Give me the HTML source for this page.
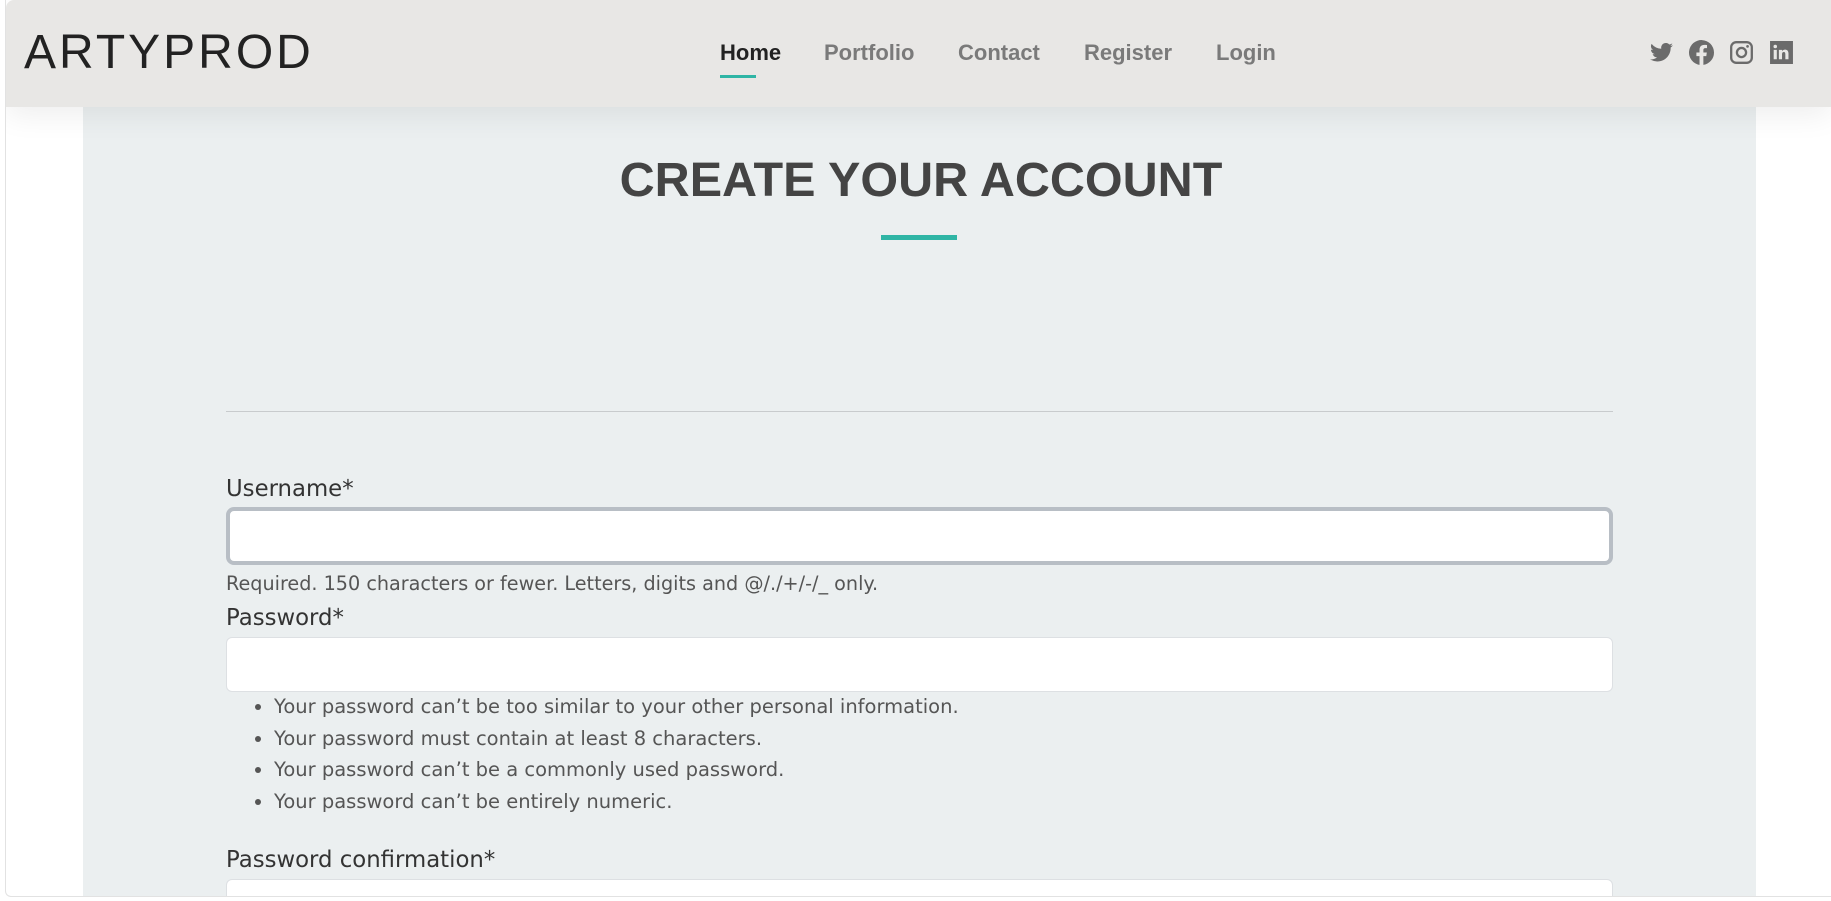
<!DOCTYPE html>
<html><head><style>
*{box-sizing:border-box;margin:0;padding:0}
body{width:1831px;height:901px;overflow:hidden;background:#fff;font-family:"Liberation Sans",Arial,sans-serif;position:relative}
.frame{position:absolute;left:5px;top:0;right:0;bottom:4px;background:#fff;border-left:1px solid #e2e2e2;border-bottom:1px solid #e2e2e2;border-radius:0 0 0 6px;overflow:hidden}
.panel{position:absolute;left:77px;width:1673px;top:0;bottom:0;background:#ebeff0}
header{position:absolute;left:0;right:0;top:0;height:107px;background:#e8e7e5;box-shadow:0 8px 30px rgba(0,0,0,.07);border-radius:8px 0 0 0}
.logo{position:absolute;left:18px;top:25px;font-size:48px;letter-spacing:3px;color:#222}
nav a{position:absolute;top:40px;font-size:22px;font-weight:bold;color:#7a7a7a;text-decoration:none}
nav a.on{color:#222}
.ul{position:absolute;left:714px;top:75px;width:36px;height:3px;background:#2fb5a5}
.icons{position:absolute;left:1643px;top:40px;display:flex;gap:15px}
.icons svg{width:25px;height:25px;fill:#6b6b6b}
h1{position:absolute;left:0;width:100%;top:152px;text-align:center;font-size:48.5px;font-weight:bold;color:#444;padding-left:5px}
.bar{position:absolute;left:875px;top:235px;width:76px;height:5px;background:#2fb5a5}
.hr{position:absolute;left:220px;width:1387px;top:411px;height:1px;background:#c8cbcd}
.f{position:absolute;left:220px;font-family:"DejaVu Sans","Liberation Sans",sans-serif;color:#333}
.lbl{font-size:22.8px}
.help{font-size:19.2px;color:#555}
.inp{position:absolute;left:220px;width:1387px;background:#fff;border:1px solid #dde0e3;border-radius:6px}
.focus{border:4px solid #b8bec5;border-radius:8px}
ul.f{font-size:19.5px;color:#555;list-style:disc;padding-left:48px}
ul.f li{height:31.5px}
</style></head><body>
<div class="frame">
<div class="panel"></div>
<header>
<div class="logo">ARTYPROD</div>
<nav>
<a class="on" style="left:714px">Home</a>
<a style="left:818px">Portfolio</a>
<a style="left:952px">Contact</a>
<a style="left:1078px">Register</a>
<a style="left:1210px">Login</a>
</nav>
<div class="ul"></div>
<div class="icons">
<svg viewBox="0 0 24 24"><path d="M23 5c-.8.4-1.7.6-2.6.7.9-.6 1.6-1.4 2-2.5-.9.5-1.900.9-2.900 1.1A4.5 4.5 0 0 0 11.8 8.4 12.8 12.8 0 0 1 2.5 3.7a4.5 4.5 0 0 0 1.4 6c-.7 0-1.4-.2-2-.6 0 2.2 1.5 4 3.6 4.4-.7.2-1.4.2-2 .1.6 1.8 2.3 3.1 4.2 3.1A9 9 0 0 1 1 18.6 12.8 12.8 0 0 0 8 20.6c8.3 0 12.8-6.9 12.8-12.8v-.6c.9-.6 1.6-1.4 2.2-2.2z"/></svg>
<svg viewBox="0 0 24 24"><path d="M24 12a12 12 0 1 0-13.9 11.9v-8.4H7.1V12h3V9.4c0-3 1.8-4.7 4.5-4.7 1.3 0 2.7.2 2.700.2v2.9h-1.5c-1.5 0-2 .9-2 1.9V12h3.3l-.5 3.5h-2.8v8.4A12 12 0 0 0 24 12z"/></svg>
<svg viewBox="0 0 24 24"><path d="M7 1h10a6 6 0 0 1 6 6v10a6 6 0 0 1-6 6H7a6 6 0 0 1-6-6V7a6 6 0 0 1 6-6zm0 2.2A3.8 3.8 0 0 0 3.2 7v10A3.8 3.8 0 0 0 7 20.8h10a3.8 3.8 0 0 0 3.8-3.8V7A3.8 3.8 0 0 0 17 3.2zM12 6.5a5.5 5.5 0 1 1 0 11 5.5 5.5 0 0 1 0-11zm0 2.2a3.3 3.3 0 1 0 0 6.6 3.3 3.3 0 0 0 0-6.6zM17.8 4.8a1.3 1.3 0 1 1 0 2.6 1.3 1.3 0 0 1 0-2.6z"/></svg>
<svg viewBox="0 0 24 24"><path d="M1 1h22v22H1zM4.5 9.5v9h3v-9zM6 4.5a1.7 1.7 0 1 0 0 3.4 1.7 1.7 0 0 0 0-3.4zM9.5 9.5v9h3v-4.8c0-1.3.5-2.200 1.700-2.200s1.5 1 1.5 2.200v4.8h3v-5.5c0-2.7-1.4-3.8-3.3-3.8-1.4 0-2.3.7-2.900 1.4V9.5z"/></svg>
</div>
</header>
<h1>CREATE YOUR ACCOUNT</h1>
<div class="bar"></div>
<div class="hr"></div>
<div class="f lbl" style="top:476px">Username*</div>
<div class="inp focus" style="top:507px;height:58px"></div>
<div class="f help" style="top:572px">Required. 150 characters or fewer. Letters, digits and @/./+/-/_ only.</div>
<div class="f lbl" style="top:605px">Password*</div>
<div class="inp" style="top:637px;height:55px"></div>
<ul class="f" style="top:695px">
<li>Your password can’t be too similar to your other personal information.</li>
<li>Your password must contain at least 8 characters.</li>
<li>Your password can’t be a commonly used password.</li>
<li>Your password can’t be entirely numeric.</li>
</ul>
<div class="f lbl" style="top:847px">Password confirmation*</div>
<div class="inp" style="top:879px;height:55px"></div>
</div>
</body></html>
